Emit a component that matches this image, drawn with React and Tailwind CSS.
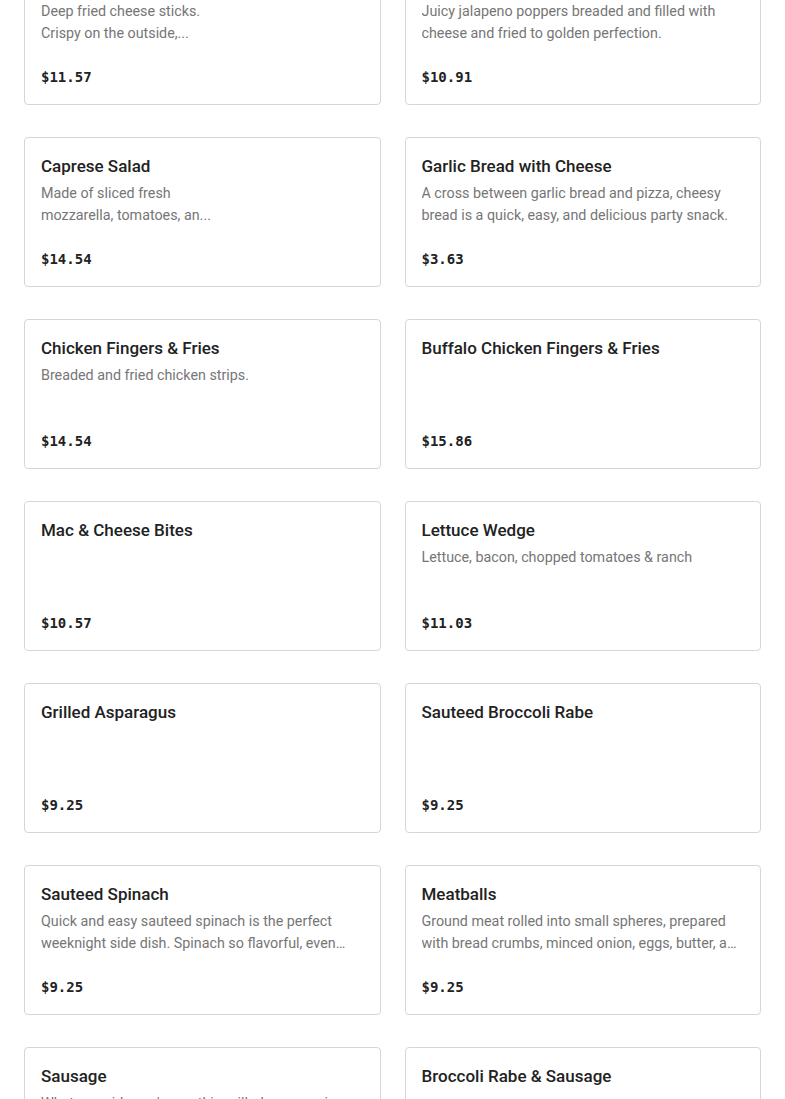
const items = [
  { name: "Mozzarella Sticks", desc: ["Deep fried cheese sticks.", "Crispy on the outside,..."], price: "$11.57" },
  { name: "Jalapeno Poppers", desc: "Juicy jalapeno poppers breaded and filled with cheese and fried to golden perfection.", price: "$10.91" },
  { name: "Caprese Salad", desc: ["Made of sliced fresh", "mozzarella, tomatoes, an..."], price: "$14.54" },
  { name: "Garlic Bread with Cheese", desc: "A cross between garlic bread and pizza, cheesy bread is a quick, easy, and delicious party snack.", price: "$3.63" },
  { name: "Chicken Fingers & Fries", desc: "Breaded and fried chicken strips.", price: "$14.54" },
  { name: "Buffalo Chicken Fingers & Fries", desc: "", price: "$15.86" },
  { name: "Mac & Cheese Bites", desc: "", price: "$10.57" },
  { name: "Lettuce Wedge", desc: "Lettuce, bacon, chopped tomatoes & ranch", price: "$11.03" },
  { name: "Grilled Asparagus", desc: "", price: "$9.25" },
  { name: "Sauteed Broccoli Rabe", desc: "", price: "$9.25" },
  { name: "Sauteed Spinach", desc: "Quick and easy sauteed spinach is the perfect weeknight side dish. Spinach so flavorful, even kids will love it.", price: "$9.25" },
  { name: "Meatballs", desc: "Ground meat rolled into small spheres, prepared with bread crumbs, minced onion, eggs, butter, and seasoning.", price: "$9.25" },
  { name: "Sausage", desc: "Whatever side you're on, this grilled sausage is a hit. 8.0 oz link served with peppers and onions.", price: "$9.25" },
  { name: "Broccoli Rabe & Sausage", desc: "", price: "$12.50" },
];

function MenuCard({ item }) {
  return (
    <div className="flex h-[150px] flex-col rounded border border-[#d6d6d6] bg-white px-4 pt-4 pb-[17px]">
      <h3 className="text-[17px] font-medium leading-6 text-[#222]">{item.name}</h3>
      <p className="mt-1 h-[44px] overflow-hidden text-[14.3px] leading-[22px] text-[#767676] line-clamp-2">
        {Array.isArray(item.desc) ? (
          <>
            {item.desc[0]}
            <br />
            {item.desc[1]}
          </>
        ) : (
          item.desc
        )}
      </p>
      <div className="mt-auto font-['DejaVu_Sans_Mono',monospace] text-sm font-bold leading-5 text-[#222]">
        {item.price}
      </div>
    </div>
  );
}

export default function App() {
  return (
    <div className="h-[1099px] overflow-hidden bg-white font-['Roboto',sans-serif]">
      <div className="-mt-[45px] grid grid-cols-2 gap-x-6 gap-y-8 px-6">
        {items.map((item) => (
          <MenuCard key={item.name} item={item} />
        ))}
      </div>
    </div>
  );
}
